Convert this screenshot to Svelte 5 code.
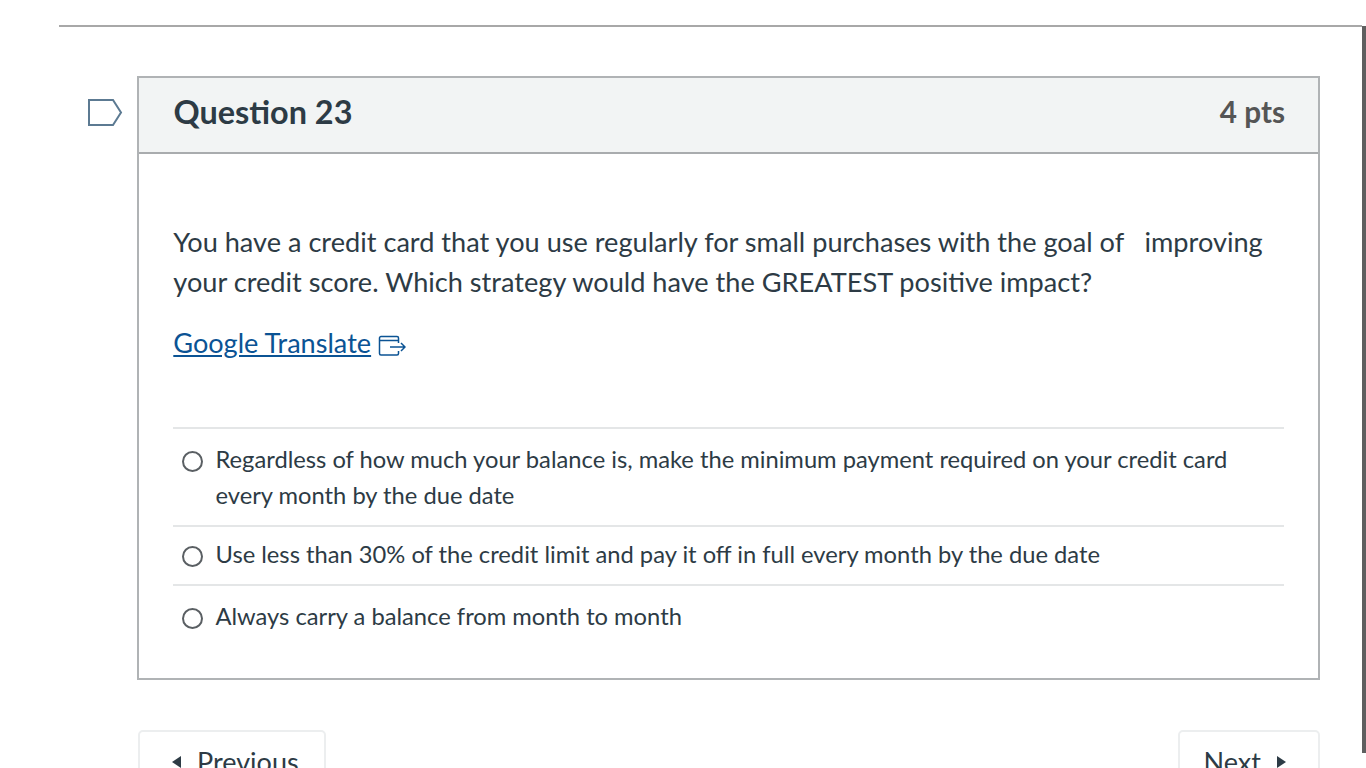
<script>
  const answers = [
    "Regardless of how much your balance is, make the minimum payment required on your credit card every month by the due date",
    "Use less than 30% of the credit limit and pay it off in full every month by the due date",
    "Always carry a balance from month to month"
  ];
</script>

<div class="page">
  <div class="scrollbar"></div>
  <div class="content">
    <hr class="rule" />

    <div class="question-row">
      <svg class="flag" width="36" height="28" viewBox="0 0 36 28" fill="none">
        <path d="M1 2H25L33 14.500L25 27H1Z" stroke="#5c7a92" stroke-width="2" />
      </svg>

      <section class="card">
        <header class="card-head">
          <h2>Question 23</h2>
          <span class="pts">4 pts</span>
        </header>

        <div class="card-body">
          <p class="text">
            You have a credit card that you use regularly for small purchases with the goal of&nbsp;&nbsp; improving your credit score. Which strategy would have the GREATEST positive impact?
          </p>
          <p class="link-line">
            <a href="#top">Google Translate</a>
            <svg class="ext" width="28" height="22" viewBox="0 0 28 22" fill="none">
              <path d="M20.500 16v2.500a1.500 1.500 0 0 1-1.500 1.500H3a1.500 1.500 0 0 1-1.500-1.500V3A1.500 1.500 0 0 1 3 1.500h16A1.500 1.500 0 0 1 20.500 3v5M1.500 5.500H20.500M12 12H26.500M23 8l4 4-4 4" stroke="#0b5394" stroke-width="1.500" />
            </svg>
          </p>

          <ul class="answers">
            {#each answers as a}
              <li>
                <span class="radio"></span>
                <span class="label">{a}</span>
              </li>
            {/each}
          </ul>
        </div>
      </section>
    </div>

    <div class="nav">
      <button class="prev"><span class="tri left"></span>Previous</button>
      <button class="next">Next<span class="tri right"></span></button>
    </div>
  </div>
</div>

<style>
  :global(body) {
    margin: 0;
    background: #fff;
    overflow: hidden;
  }

  .page {
    height: 768px;
    overflow: hidden;
    font-family: Lato, "Open Sans", sans-serif;
    color: #2d3b45;
  }

  .scrollbar {
    position: absolute;
    top: 26px;
    right: 0;
    width: 4px;
    height: 727px;
    background: #5f5f5f;
  }

  .content {
    margin-left: 59px;
    margin-right: 4px;
    padding-top: 25px;
  }

  .rule {
    margin: 0;
    border: 0;
    height: 2px;
    background: #a8a8a8;
  }

  .question-row {
    display: flex;
    align-items: flex-start;
    margin-top: 49px;
    padding-right: 42px;
  }

  .flag {
    margin: 22px 13px 0 29px;
    flex: none;
  }

  .card {
    flex: 1;
    border: 2px solid #b0b3b5;
  }

  .card-head {
    display: flex;
    justify-content: space-between;
    align-items: center;
    box-sizing: border-box;
    height: 76px;
    padding: 0 33px 8px 34.500px;
    background: #f2f4f4;
    border-bottom: 2px solid #a9acae;
  }

  h2 {
    margin: 0;
    font-size: 32.4px;
    font-weight: 700;
  }

  .pts {
    font-size: 29.7px;
    font-weight: 700;
    color: #555;
  }

  .card-body {
    padding: 68px 34px 32px;
  }

  .text {
    margin: 0 0 0 0.3px;
    font-size: 27.15px;
    line-height: 40px;
  }

  .link-line {
    margin: 21px 0 0 0.3px;
    font-size: 27.1px;
    line-height: 40px;
    display: flex;
    align-items: center;
    gap: 7px;
  }

  a {
    color: #0b5394;
  }

  .ext {
    margin-top: 6px;
  }

  .answers {
    list-style: none;
    margin: 64px 0 0;
    padding: 0;
  }

  li {
    display: flex;
    border-top: 2px solid #e4e6e7;
    padding: 12px 8px 12px 8.500px;
    font-size: 23.72px;
    line-height: 36px;
  }

  li:nth-child(2) {
    padding-top: 9px;
  }

  .radio {
    flex: none;
    box-sizing: border-box;
    width: 21px;
    height: 21px;
    margin: 10px 13px 0 0;
    border: 2px solid #5a5f63;
    border-radius: 50%;
  }

  .nav {
    display: flex;
    justify-content: space-between;
    margin: 50px 42px 0 79px;
  }

  button {
    font: inherit;
    font-size: 27px;
    line-height: 40px;
    color: #2d3b45;
    background: #fff;
    border: 2px solid #eceeef;
    border-radius: 5px;
    padding: 10px 24px;
    display: flex;
    align-items: center;
    gap: 16px;
  }

  .prev {
    padding-left: 32px;
    padding-right: 25px;
  }

  .next {
    padding-right: 32px;
  }

  .tri {
    width: 0;
    height: 0;
    border-top: 6px solid transparent;
    border-bottom: 6px solid transparent;
  }

  .left {
    border-right: 9px solid #2d3b45;
  }

  .right {
    border-left: 9px solid #2d3b45;
  }
</style>
